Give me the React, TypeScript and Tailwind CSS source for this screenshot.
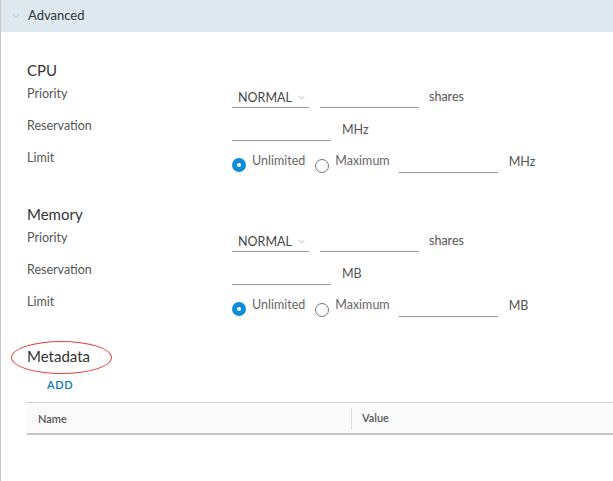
import { ChevronDown } from "lucide-react";

type Unit = "MHz" | "MB";

function Underline({ w }: { w: string }) {
  return <div className={`${w} h-[27px] border-b border-[#9a9a9a]`} />;
}

function Radio({ checked }: { checked?: boolean }) {
  return checked ? (
    <span className="flex h-[14px] w-[14px] items-center justify-center rounded-full bg-[#0a8dd6]">
      <span className="h-[4px] w-[4px] rounded-full bg-white" />
    </span>
  ) : (
    <span className="block h-[14px] w-[14px] rounded-full border border-[#777] bg-white" />
  );
}

function ResourceSection({ title, unit }: { title: string; unit: Unit }) {
  return (
    <section className="flex flex-col">
      <h3 className="h-[22px] text-[15px] leading-[22px] text-[#333]">{title}</h3>

      {/* Priority */}
      <div className="flex h-[33px] items-start">
        <div className="w-[205px] pt-[4px] text-[12.5px] leading-[17px] text-[#555]">Priority</div>
        <div className="flex h-[27px] w-[77px] items-end justify-between border-b border-[#9a9a9a] pl-[6px] pr-[2px] pb-[1px] text-[12.5px] leading-[17px] text-[#444]">
          <span>NORMAL</span>
          <ChevronDown size={11} strokeWidth={1.2} className="mb-[3px] text-[#888]" />
        </div>
        <div className="ml-[11px]">
          <Underline w="w-[99px]" />
        </div>
        <span className="ml-[10px] pt-[7px] text-[12.5px] leading-[17px] text-[#555]">shares</span>
      </div>

      {/* Reservation */}
      <div className="flex h-[32px] items-start">
        <div className="w-[205px] pt-[3px] text-[12.5px] leading-[17px] text-[#555]">Reservation</div>
        <Underline w="w-[99px]" />
        <span className="ml-[11px] pt-[7px] text-[12.5px] leading-[17px] text-[#555]">{unit}</span>
      </div>

      {/* Limit */}
      <div className="flex h-[32px] items-start">
        <div className="w-[205px] pt-[3px] text-[12.5px] leading-[17px] text-[#555]">Limit</div>
        <div className="flex items-start pt-[6px]">
          <div className="mt-[6px]">
            <Radio checked />
          </div>
          <span className="ml-[6px] text-[12.5px] leading-[17px] text-[#666]">Unlimited</span>
          <div className="ml-[10px] mt-[7px]">
            <Radio />
          </div>
          <span className="ml-[6px] text-[12.5px] leading-[17px] text-[#666]">Maximum</span>
        </div>
        <div className="ml-[9px]">
          <Underline w="w-[99px]" />
        </div>
        <span className="ml-[11px] pt-[7px] text-[12.5px] leading-[17px] text-[#555]">{unit}</span>
      </div>
    </section>
  );
}

export default function App() {
  return (
    <div
      className="h-[481px] w-[613px] overflow-hidden border-l border-[#c8c8c8] bg-white"
      style={{ fontFamily: "Lato, 'Noto Sans', sans-serif" }}
    >
      {/* Header */}
      <div className="flex h-[32px] items-center gap-[6px] bg-[#dde8ef] pl-[9px] text-[13px] text-[#333]">
        <ChevronDown size={12} strokeWidth={1.3} className="text-[#8a9aa6]" />
        <span>Advanced</span>
      </div>

      <div className="flex flex-col pl-[26px] pt-[27px]">
        <ResourceSection title="CPU" unit="MHz" />
        <div className="h-[25px]" />
        <ResourceSection title="Memory" unit="MB" />

        {/* Metadata */}
        <div className="relative mt-[23px] h-[22px] w-fit text-[15px] leading-[22px] text-[#333]">
          Metadata
          <span className="absolute left-[-16px] top-[-4px] h-[33px] w-[101px] rounded-[50%] border-[1.5px] border-[#e8433f]" />
        </div>
        <div className="mt-[10px] pl-[20px] text-[11px] leading-[16px] font-semibold tracking-[0.06em] text-[#0079b8]">
          ADD
        </div>

        <div className="mt-[9px] flex h-[33px] items-center border-t border-[#d0d0d0] border-b-2 border-b-[#c4c4c4] bg-[#fafafa] text-[11px] font-semibold text-[#565656]">
          <div className="w-[325px] border-r border-[#ddd] pl-[11px] leading-[21px]">Name</div>
          <div className="pl-[10px]">Value</div>
        </div>
      </div>
    </div>
  );
}
